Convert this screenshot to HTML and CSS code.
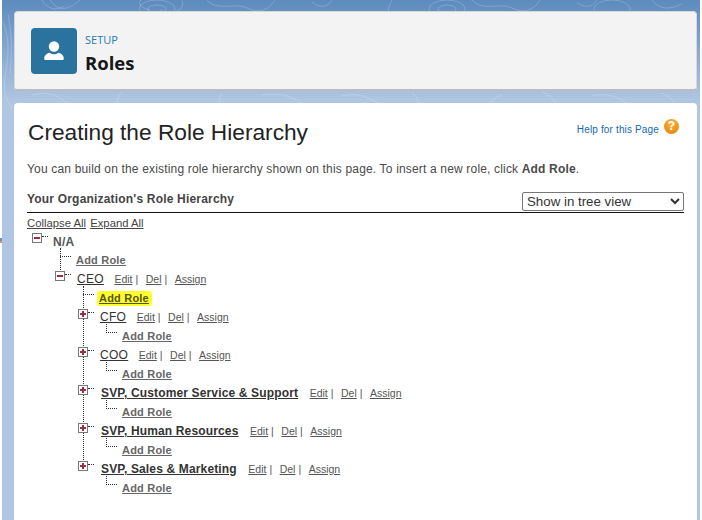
FILE: index.html
```html
<!DOCTYPE html>
<html lang="en">
<head>
<meta charset="utf-8">
<title>Roles</title>
<link rel="stylesheet" href="styles.css">
</head>
<body>
<div class="backdrop">
  <svg class="contours" width="698" height="110" viewBox="0 0 698 110" fill="none" stroke="#fff" stroke-opacity=".2" aria-hidden="true">
    <path d="M40 0c4 8 14 12 22 6M48 0c10 14 20 8 30 0"/>
    <path d="M148 10c-12-2-12-10-8-10M180 0c4 10-10 16-22 10"/>
    <path d="M205 0c10 12 28 2 40 8s22 2 28-8M330 0c-4 8-14 8-20 2"/>
    <ellipse cx="155" cy="9" rx="18" ry="9"/><ellipse cx="155" cy="9" rx="9" ry="4"/>
    <ellipse cx="445" cy="9" rx="18" ry="9"/><ellipse cx="445" cy="9" rx="9" ry="4"/>
    <path d="M390 0c-4 8-4 10-3 11M470 0c10 12 28 2 40 8s22 2 28-8M595 0c-4 8-14 8-20 2"/>
    <ellipse cx="610" cy="9" rx="18" ry="9"/><path d="M650 0c10 12 20 8 30 4"/>
    <path d="M0 20c6 12 8 30 4 50s0 30 6 38M6 14c4 20 4 40 2 60"/>
    <path d="M30 95c20-6 30 4 40 12M120 92c-6 6-6 12-4 18M220 93c-4 6-4 12 2 17M260 95c20-4 36 4 44 12"/>
    <path d="M340 96c16-4 30 2 40 10M410 92c6 6 8 12 8 18M500 95c-10 4-14 8-16 14M540 92c10 4 14 10 16 18M590 96c16-4 30 2 40 12M660 93c8 4 14 10 16 16"/>
  </svg>
</div>
<span class="edge-mark"></span>
<main class="page">
  <header class="page-head">
    <div class="head-icon">
      <svg width="24" height="24" viewBox="0 0 24 24" fill="#fff" aria-hidden="true">
        <circle cx="12" cy="7.5" r="5.2"/>
        <path d="M2.2 19.5c0-3.7 3.4-5.2 5.6-5.7 1.2 1 2.6 1.5 4.2 1.5s3-.5 4.2-1.5c2.200.5 5.600 2 5.600 5.700 0 1-.7 1.500-1.500 1.500H3.700c-.8 0-1.500-.5-1.500-1.500z"/>
      </svg>
    </div>
    <div class="head-text">
      <div class="eyebrow">SETUP</div>
      <div class="head-title">Roles</div>
    </div>
  </header>
  <section class="card">
    <div class="title-row">
      <h1 class="title">Creating the Role Hierarchy</h1>
      <div class="help">
        <a class="help-link">Help for this Page</a>
        <span class="help-icon">?</span>
      </div>
    </div>
    <p class="intro">You can build on the existing role hierarchy shown on this page. To insert a new role, click <b>Add Role</b>.</p>
    <div class="section-head">
      <h2 class="section-title">Your Organization's Role Hierarchy</h2>
      <select class="view-select"><option>Show in tree view</option></select>
    </div>
    <div class="tree-tools"><a>Collapse All</a> <a>Expand All</a></div>

    <ul class="tree root">
      <li class="node">
        <div class="row top"><span class="toggle minus"></span><span class="dots"></span><span class="plain-name">N/A</span></div>
        <ul class="tree">
          <li class="leaf"><span class="leaf-dots"></span><a class="add">Add Role</a></li>
          <li class="node">
            <div class="row"><span class="toggle minus"></span><span class="dots"></span><a class="name thin">CEO</a><a class="act first">Edit</a><span class="sep">|</span><a class="act">Del</a><span class="sep">|</span><a class="act">Assign</a></div>
            <ul class="tree">
              <li class="leaf"><span class="leaf-dots"></span><a class="add marked">Add Role</a></li>
              <li class="node">
                <div class="row"><span class="toggle plus"></span><span class="dots"></span><a class="name thin">CFO</a><a class="act first">Edit</a><span class="sep">|</span><a class="act">Del</a><span class="sep">|</span><a class="act">Assign</a></div>
                <ul class="tree"><li class="leaf"><span class="leaf-dots"></span><a class="add">Add Role</a></li></ul>
              </li>
              <li class="node">
                <div class="row"><span class="toggle plus"></span><span class="dots"></span><a class="name thin">COO</a><a class="act first">Edit</a><span class="sep">|</span><a class="act">Del</a><span class="sep">|</span><a class="act">Assign</a></div>
                <ul class="tree"><li class="leaf"><span class="leaf-dots"></span><a class="add">Add Role</a></li></ul>
              </li>
              <li class="node">
                <div class="row"><span class="toggle plus"></span><span class="dots"></span><a class="name">SVP, Customer Service &amp; Support</a><a class="act first">Edit</a><span class="sep">|</span><a class="act">Del</a><span class="sep">|</span><a class="act">Assign</a></div>
                <ul class="tree"><li class="leaf"><span class="leaf-dots"></span><a class="add">Add Role</a></li></ul>
              </li>
              <li class="node">
                <div class="row"><span class="toggle plus"></span><span class="dots"></span><a class="name">SVP, Human Resources</a><a class="act first">Edit</a><span class="sep">|</span><a class="act">Del</a><span class="sep">|</span><a class="act">Assign</a></div>
                <ul class="tree"><li class="leaf"><span class="leaf-dots"></span><a class="add">Add Role</a></li></ul>
              </li>
              <li class="node">
                <div class="row"><span class="toggle plus"></span><span class="dots"></span><a class="name">SVP, Sales &amp; Marketing</a><a class="act first">Edit</a><span class="sep">|</span><a class="act">Del</a><span class="sep">|</span><a class="act">Assign</a></div>
                <ul class="tree"><li class="leaf"><span class="leaf-dots"></span><a class="add">Add Role</a></li></ul>
              </li>
            </ul>
          </li>
        </ul>
      </li>
    </ul>
  </section>
</main>
</body>
</html>
```
FILE: styles.css
```css
* { box-sizing: border-box; }

html, body {
  margin: 0;
  height: 520px;
  overflow: hidden;
  background: #fff;
  font-family: "Liberation Sans", Arial, sans-serif;
}

.backdrop {
  position: absolute;
  left: 2px;
  top: 0;
  width: 698px;
  height: 520px;
  background: linear-gradient(#5c8bbd 0, #7ea2cd 40px, #afc5e1 100px, #b0c6e2 520px);
  overflow: hidden;
}

.contours { display: block; }

.edge-mark {
  position: absolute;
  left: 0;
  top: 238px;
  width: 2px;
  height: 5px;
  background: linear-gradient(#6d93b8 50%, #d99a4a 50%);
}

.page {
  position: relative;
  padding: 11px 5px 0 14px;
}

.page-head {
  display: flex;
  align-items: flex-start;
  height: 80px;
  padding: 17px 0 0 16px;
  background: #f3f3f3;
  border: 1px solid #d8d8d8;
  border-bottom: 2px solid #b9bcc0;
  border-radius: 4px;
}

.head-icon {
  display: flex;
  align-items: center;
  justify-content: center;
  width: 46px;
  height: 46px;
  margin-top: -1px;
  background: #2a739f;
  border-radius: 4px;
}

.head-text { margin-left: 8px; }

.eyebrow {
  margin-top: 4px;
  font: 11px/14px "Open Sans", sans-serif;
  color: #2a7ab0;
}

.head-title {
  margin-top: 4px;
  font: 700 18.500px/24px "Open Sans", sans-serif;
  color: #16181a;
}

.card {
  height: 417px;
  margin-top: 12px;
  padding: 0 13px;
  background: #fff;
  border-radius: 4px 4px 0 0;
  color: #3e3e3c;
}

.title-row {
  display: flex;
  justify-content: space-between;
  height: 48px;
  padding-top: 13px;
}

.title {
  margin: 0 0 0 1px;
  font-size: 22.700px;
  font-weight: 400;
  line-height: 32px;
  color: #222;
}

.help {
  display: flex;
  align-items: flex-start;
  padding: 3px 5px 0 0;
}

.help-link {
  margin-top: 5px;
  font-size: 10px;
  line-height: 12px;
  letter-spacing: .15px;
  color: #1468b8;
}

.help-icon {
  width: 15px;
  height: 15px;
  margin-left: 5px;
  border-radius: 50%;
  background: radial-gradient(circle at 50% 30%, #fbb437, #dd7f0c);
  color: #fff;
  font-size: 12px;
  font-weight: 700;
  line-height: 15px;
  text-align: center;
}

.intro {
  margin: 10px 0 0;
  font-size: 12px;
  line-height: 16px;
  letter-spacing: .17px;
  color: #4a4a4a;
}

.section-head {
  display: flex;
  justify-content: space-between;
  align-items: flex-end;
  height: 24px;
  margin-top: 12px;
  border-bottom: 1px solid #111;
}

.section-title {
  margin: 0 0 5px;
  font-size: 12px;
  font-weight: 700;
  line-height: 16px;
  letter-spacing: .19px;
  color: #444;
}

.view-select {
  width: 162px;
  height: 19px;
  margin-bottom: 1px;
  padding: 0;
  border: 1px solid #767676;
  border-radius: 2px;
  background: #fff;
  font: 13.300px "Liberation Sans", sans-serif;
  color: #333;
}

.tree-tools {
  margin-top: 4px;
  font-size: 11.300px;
  line-height: 13px;
  color: #444;
}

.tree-tools a { text-decoration: underline; }

.tree-tools a + a { margin-left: 1px; }

.tree {
  position: relative;
  margin: 0;
  padding: 0;
  list-style: none;
}

.tree .tree { margin-left: 23px; }

.root { margin: 2px 0 0 10px; }

.tree .tree > li { position: relative; }

.tree .tree > li::before {
  content: "";
  position: absolute;
  left: 0;
  top: -3px;
  bottom: 0;
  border-left: 1px dotted #333;
}

.tree .tree > li:last-child::before {
  bottom: auto;
  height: 9px;
}

.leaf {
  display: flex;
  height: 19px;
}

.leaf-dots {
  width: 11px;
  height: 6px;
  flex: none;
  border-bottom: 1px dotted #333;
}

.add {
  margin: 2px 0 0 5px;
  height: 15px;
  font-size: 11px;
  font-weight: 700;
  line-height: 15px;
  letter-spacing: .2px;
  color: #666;
  text-decoration: underline;
}

.marked {
  margin: 2px 0 0 3px;
  height: 15px;
  padding: 0 3px 0 2px;
  border-radius: 3px;
  background: #ffff2e;
  color: #55550f;
}

.row {
  position: relative;
  display: flex;
  height: 19px;
}

.toggle {
  position: relative;
  z-index: 1;
  width: 10px;
  height: 10px;
  flex: none;
  margin: 1px 0 0 -5px;
  background: #fff;
  border: 1px solid #777;
}

.toggle::before {
  content: "";
  position: absolute;
  left: 1px;
  top: 3px;
  width: 6px;
  height: 2px;
  background: #9b2c46;
}

.plus::after {
  content: "";
  position: absolute;
  left: 3px;
  top: 1px;
  width: 2px;
  height: 6px;
  background: #9b2c46;
}

.dots {
  width: 6px;
  height: 5px;
  flex: none;
  margin: 0 6px 0 0;
  border-bottom: 1px dotted #333;
}

.top .dots { margin-right: 5px; }

.plain-name {
  font-size: 12px;
  font-weight: 700;
  line-height: 21px;
  letter-spacing: .3px;
  color: #555;
}

.name {
  margin-left: 1px;
  font-size: 12px;
  font-weight: 700;
  line-height: 16px;
  letter-spacing: .15px;
  color: #333;
  text-decoration: underline;
  align-self: flex-start;
  margin-top: 1px;
}

.thin {
  margin-left: 0;
  font-weight: 400;
  font-size: 12px;
  letter-spacing: .3px;
}

.act {
  margin: 2px 0 0 0;
  font-size: 10.500px;
  line-height: 15px;
  color: #555;
  text-decoration: underline;
  align-self: flex-start;
}

.first { margin-left: 11.500px; }

.thin + .first { margin-left: 10.500px; }

.sep {
  margin: 2px 7.500px 0 3px;
  font-size: 10.500px;
  line-height: 15px;
  color: #555;
}
```
